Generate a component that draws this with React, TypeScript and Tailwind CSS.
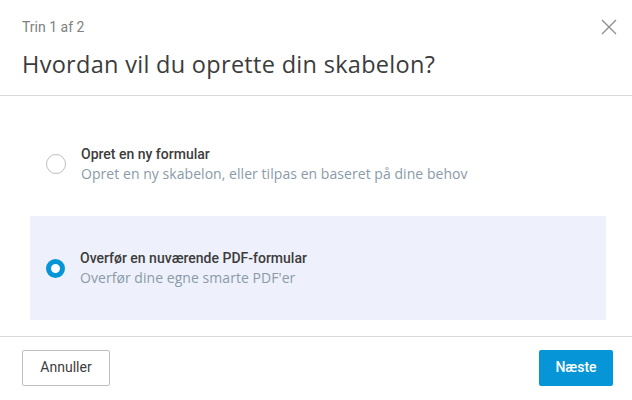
import React, { useState } from "react";

interface Option {
  id: string;
  title: string;
  description: string;
}

const options: Option[] = [
  {
    id: "new",
    title: "Opret en ny formular",
    description: "Opret en ny skabelon, eller tilpas en baseret på dine behov",
  },
  {
    id: "upload",
    title: "Overfør en nuværende PDF-formular",
    description: "Overfør dine egne smarte PDF'er",
  },
];

export default function App() {
  const [selected, setSelected] = useState("upload");

  return (
    <div
      className="w-[632px] h-[400px] bg-white flex flex-col text-[#3c3c3c]"
      style={{ fontFamily: "Roboto, 'Noto Sans', sans-serif" }}
    >
      {/* Header */}
      <div className="relative h-[96px] border-b border-[#d9d9d9] pl-[22px] pt-[17px]">
        <div className="text-[14px] leading-[20px] text-[#808080]">Trin 1 af 2</div>
        <h1 className="mt-[12px] text-[23.5px] leading-[30px] font-normal font-['Open_Sans',sans-serif] tracking-[0.3px]">
          Hvordan vil du oprette din skabelon?
        </h1>
        <button className="absolute right-[14px] top-[18px] w-[18px] h-[18px] flex items-center justify-center">
          <svg width="16" height="16" viewBox="0 0 16 16" fill="none" stroke="#8c8c8c" strokeWidth="1.3">
            <path d="M1 1 L15 15 M15 1 L1 15" />
          </svg>
        </button>
      </div>

      {/* Options */}
      <div className="flex-1 flex flex-col pt-[16px] pl-[30px] pr-[26px]">
        {options.map((o) => {
          const active = selected === o.id;
          return (
            <button
              key={o.id}
              onClick={() => setSelected(o.id)}
              className={`h-[104px] flex items-center text-left pl-[16px] ${active ? "bg-[#eef1fb]" : ""}`}
            >
              {active ? (
                <span className="w-[19px] h-[19px] rounded-full border-[5px] border-[#0696d7] bg-white shrink-0" />
              ) : (
                <span className="w-[20px] h-[20px] rounded-full border border-[#bfbfbf] bg-white shrink-0" />
              )}
              <span className="ml-[15px] flex flex-col">
                <span className="text-[14px] leading-[20px] font-medium text-[#3c3c3c]">{o.title}</span>
                <span className="text-[14px] leading-[20px] text-[#8a9aa9] font-['Open_Sans',sans-serif] tracking-[0.05px]">
                  {o.description}
                </span>
              </span>
            </button>
          );
        })}
      </div>

      {/* Footer */}
      <div className="h-[64px] border-t border-[#d9d9d9] flex items-center justify-between pl-[22px] pr-[19px] pb-[2px]">
        <button className="h-[36px] w-[88px] border border-[#bfbfbf] rounded-[2px] text-[14px] text-[#3c3c3c] bg-white">
          Annuller
        </button>
        <button className="h-[36px] w-[74px] rounded-[2px] text-[14px] font-medium text-white bg-[#0696d7]">
          Næste
        </button>
      </div>
    </div>
  );
}
